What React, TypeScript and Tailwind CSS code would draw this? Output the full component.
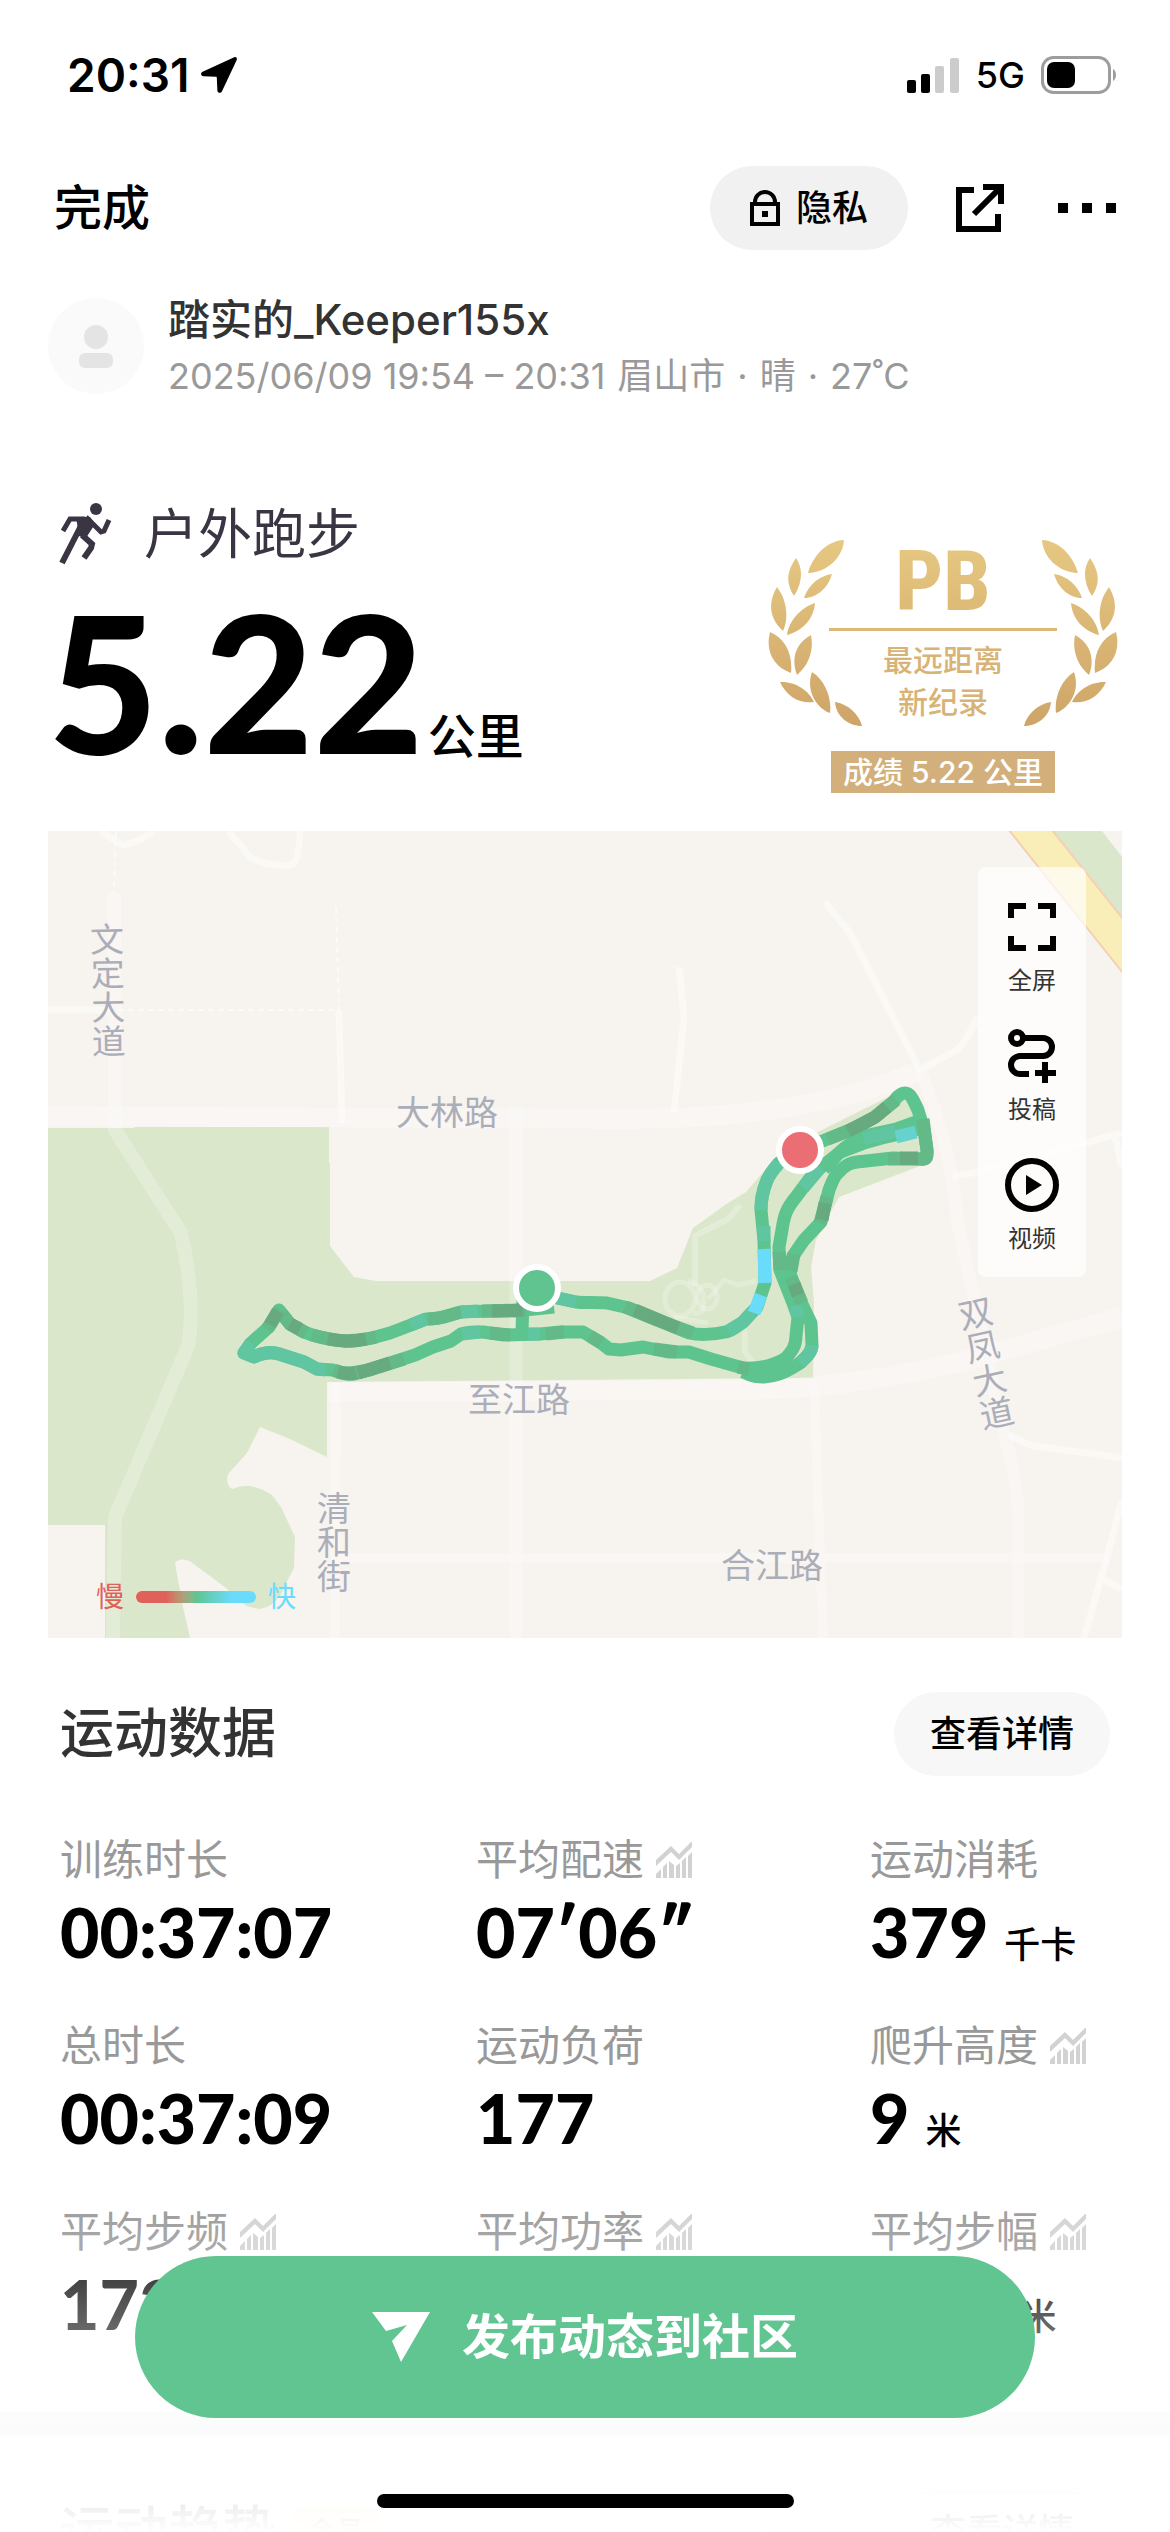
import type { ReactNode } from "react";

interface Stat {
  label: string;
  value?: string;
  unit?: string;
  chart?: boolean;
}

const stats: Stat[] = [
  { label: "训练时长", value: "00:37:07" },
  { label: "平均配速", value: "07′06″", chart: true },
  { label: "运动消耗", value: "379", unit: "千卡" },
  { label: "总时长", value: "00:37:09" },
  { label: "运动负荷", value: "177" },
  { label: "爬升高度", value: "9", unit: "米", chart: true },
  { label: "平均步频", value: "173", chart: true },
  { label: "平均功率", chart: true },
  { label: "平均步幅", value: "0.81", unit: "米", chart: true },
];

function StatusBar() {
  return (
    <div className="flex h-[150px] items-center justify-between pl-[67px] pr-[53px]">
      <div className="flex items-center gap-3">
        <span className="text-[46px] font-semibold leading-none">20:31</span>
        <svg className="size-9" viewBox="0 0 36 36">
          <path
            d="M33.2.3 1.6 14.8c-2.3 1.1-1.9 4.3.8 4.5l12.4.5c.7 0 1 .3 1 1l.6 12.6c.2 2.8 3.4 3.4 4.6.8L35.7 3C36.5 1.200 35-.5 33.200.3z"
            fill="#000"
          />
        </svg>
      </div>
      <div className="flex items-center gap-4">
        <svg className="h-[35px] w-[53px]" viewBox="0 0 53 35">
          <rect x="0" y="22" width="9" height="13" rx="2" fill="#000" />
          <rect x="14" y="16" width="9" height="19" rx="2" fill="#000" />
          <rect x="28" y="8" width="9" height="27" rx="2" fill="#ccc" />
          <rect x="43" y="0" width="9" height="35" rx="2" fill="#ccc" />
        </svg>
        <span className="text-[36px] font-medium leading-none">5G</span>
        <svg className="h-[38px] w-[76px]" viewBox="0 0 76 38">
          <rect x="1.500" y="1.500" width="67" height="35" rx="11" fill="none" stroke="#9d9d9d" strokeWidth="3" />
          <rect x="6" y="6" width="28" height="26" rx="7" fill="#000" />
          <path d="M72 13c4 2 4 10 0 12z" fill="#9d9d9d" />
        </svg>
      </div>
    </div>
  );
}

function LockIcon() {
  return (
    <svg className="h-9 w-[30px]" viewBox="0 0 30 36" fill="none" stroke="#000" strokeWidth="4">
      <path d="M2 14h26v20H2z" />
      <path d="M5 13v-1a10 10 0 0 1 20 0v1" />
      <path d="M12 21h6v6h-6z" fill="#000" stroke="none" />
    </svg>
  );
}

function ShareIcon() {
  return (
    <svg className="size-[50px]" viewBox="0 0 50 50" fill="none" stroke="#000" strokeWidth="6">
      <path d="M20 7H5v39h39V31" />
      <path d="M29 4h18v17M45 6 20 31" />
    </svg>
  );
}

function RunnerIcon() {
  return (
    <svg className="h-[62px] w-[54px]" viewBox="0 0 54 62">
      <circle cx="38" cy="6" r="6" fill="#3b3543" />
      <g fill="none" stroke="#3b3543">
        <path d="M5 28l7-12h15" strokeWidth="5" />
        <path d="M27 15 4 60" strokeWidth="6" />
        <path d="M28 14l15 15 3-1 5-11" strokeWidth="5" />
        <path d="M24 32l10 9-1 4-7 10" strokeWidth="6" />
      </g>
      <path d="M18 14h14l5 7-9 14-7-2z" fill="#3b3543" />
    </svg>
  );
}

function ChartIcon() {
  return (
    <svg className="size-9" viewBox="0 0 36 36" fill="#d2d2d2">
      <path d="M0 18 15 4l8 8L36-1v6L23 18l-8-8L0 24z" />
      <path d="M0 32l5-5v9H0zM7 25l4-4v15H7zM13 19l5 4v13h-5zM20 24l4-3v15h-4zM26 19l4-4v21h-4zM32 14l4-4v26h-4z" />
    </svg>
  );
}

const leaves =
  "M143 0C142 16 128 32 107 33C111 18 124 1 143 0ZM95 18C102 28 102 42 93 56C86 45 84 34 95 18ZM131 34C127 48 116 58 103 58C107 46 117 36 131 34ZM76 47C86 60 88 78 82 91C69 79 66 64 76 47ZM114 63C113 78 102 91 86 95C88 81 99 68 114 63ZM69 92C84 98 92 114 90 133C73 127 64 112 69 92ZM110 95C113 110 108 125 96 135C90 119 94 104 110 95ZM111 132C124 140 131 158 129 173C117 169 104 152 111 132ZM79 142C93 141 108 150 113 162C99 164 86 157 79 142ZM134 162C147 164 158 174 161 186C147 186 135 176 134 162Z";

function RecordBadge() {
  return (
    <div className="flex flex-col items-center gap-7">
      <div className="relative flex w-[350px] flex-col items-center">
        <svg className="absolute left-0 top-0 h-[188px] w-full" viewBox="0 0 350 188">
          <defs>
            <linearGradient id="gold" x1="0" y1="0" x2="0" y2="188" gradientUnits="userSpaceOnUse">
              <stop offset="0" stopColor="#e6c882" />
              <stop offset="1" stopColor="#cea468" />
            </linearGradient>
          </defs>
          <g fill="url(#gold)">
            <path d={leaves} transform="translate(-67 0)" />
            <path d={leaves} transform="matrix(-1 0 0 1 417 0)" />
          </g>
        </svg>
        <span className="bg-linear-to-b from-[#e6c882] to-[#dbb875] bg-clip-text font-['Roboto_Condensed',Roboto,sans-serif] text-[84px] font-extrabold leading-[84px] text-transparent">
          PB
        </span>
        <div className="mt-1 h-[3px] w-[228px] bg-[#dcb978]" />
        <p className="mt-2 text-center text-[30px] font-medium leading-[42px] text-[#d8b376]">
          最远距离
          <br />
          新纪录
        </p>
      </div>
      <span className="bg-[#d2af7b] px-3 text-[30px] font-medium leading-[42px] text-white">
        成绩 5.22 公里
      </span>
    </div>
  );
}

const upperRoute =
  "M506 476L467 480C440 480 425 480 413 481C400 484 395 488 378 488L363 494L342 502L324 507C310 510 300 511 296 510C285 509 270 507 256 501L242 493L231 479L221 496L203 512L196 522L206 526C214 522 222 520 231 523L256 531L269 538L285 539C292 542 300 544 306 543L321 539L367 524L385 516L403 510L413 503C420 500 428 501 435 501L456 504L492 503L513 501L535 501L552 511L561 518L573 519L595 516L620 521L641 521L663 528L695 537C712 538 725 535 738 527C744 520 748 515 748 505L750 486L745 472L732 439L731 416L734 399C736 385 738 378 748 366L766 342L791 322C800 317 810 315 816 312L834 307L856 302L877 296";

const lowerRoute =
  "M695 541C705 546 710 546 716 546C728 545 735 543 752 532C760 525 764 520 764 514L763 492L752 469L743 446C741 436 743 430 745 425L756 409L773 391L781 359C785 348 788 343 791 341C798 333 803 332 809 331L845 327L873 328C880 329 879 324 879 319L876 299L870 279C865 268 862 262 857 262C851 262 848 268 845 271L827 286C815 293 810 296 802 299L752 319L731 332C724 340 720 345 718 352C714 362 713 370 713 379L716 409L717 452L709 476L695 491C685 499 680 501 677 501C665 504 650 504 641 502L609 489L581 477L559 472C550 471 535 472 528 471L509 467L489 457M776 338C790 325 790 318 816 305L848 298L873 289M475 466L474 501";

function RouteMap() {
  return (
    <svg className="block w-full bg-[#f7f4ef]" viewBox="0 0 1074 807" role="img" aria-label="跑步轨迹">
      <path
        d="M0 297L86 297L86 296H281V332H282V415L306 446L328 450H602L629 437L645 397L677 374L698 361L730 324L770 301L848 262L873 270L885 330L791 366L780 386L768 409L763 436L766 472L765 547L634 548L279 551V626L242 608L212 596L199 622L181 642C177 648 180 658 185 658C195 653 210 654 224 664L233 676L247 706L246 737L238 752C232 770 222 776 212 778C204 777 199 775 197 774L178 757L147 734C140 727 130 727 127 732L135 776L142 807H57V694H0Z"
        fill="#dae7cb"
      />
      <path d="M1004 0H1054L1074 26V87Z" fill="#dae7cb" />
      <path d="M961 -1H1004L1075 88V142Z" fill="#faeeb8" stroke="#f5cfb4" strokeWidth="2" />

      {/* Roads */}
      <g fill="none" stroke="#fff" strokeLinejoin="round">
        <g strokeOpacity=".42" strokeWidth="7">
          <path d="M53 0L74 14Q90 12 106 0M180 0L203 27Q220 36 244 34Q251 30 252 0M0 179H60M291 179L294 292" />
          <path d="M631 136L636 186L626 282M777 71L802 102L872 239L909 219Q922 205 929 186M904 346L929 341L1074 302M1066 302L1074 336" />
          <path d="M961 604L981 614L1074 627M1074 669L1059 726L1036 807M1054 747L1074 759" />
        </g>
        <g strokeOpacity=".5" strokeWidth="2" strokeDasharray="6 4">
          <path d="M68 0L66 62M60 179H290M288 76L291 179" />
        </g>
        <g strokeOpacity=".24">
          <path d="M66 62L67 299L133 402Q148 470 140 515L67 686L65 807" strokeWidth="14" />
          <path d="M0 285L552 288Q760 290 872 239" strokeWidth="20" />
          <path d="M468 276V807M872 239Q905 320 909 389L956 602Q970 650 970 686V807" strokeWidth="13" />
          <path d="M280 561L700 559Q800 557 909 532L1074 486" strokeWidth="20" />
          <path d="M766 549L775 807M288 552L287 807M288 727L1059 727" strokeWidth="10" />
          <path d="M647 455V405L680 388L692 374M697 500V520L708 537" strokeWidth="6" />
          <ellipse cx="632" cy="468" rx="15" ry="17" strokeWidth="5" />
          <ellipse cx="659" cy="466" rx="10" ry="12" strokeWidth="5" />
          <path d="M640 450Q656 455 656 470T645 482M660 468L676 449L690 454L708 450M625 486L660 492" strokeWidth="5" />
        </g>
      </g>

      {/* Road names */}
      <g
        className="font-['Noto_Sans_CJK_SC',sans-serif] text-[34px]"
        fill="#abaeb9"
        textAnchor="middle"
      >
        <text x="399" y="294">大林路</text>
        <text x="471" y="581">至江路</text>
        <text x="724" y="747">合江路</text>
        <text className="[writing-mode:vertical-rl]" x="60" y="159" transform="rotate(-1 60 159)">
          文定大道
        </text>
        <text className="[writing-mode:vertical-rl]" x="286" y="711">
          清和街
        </text>
        <text className="[writing-mode:vertical-rl]" x="938" y="532" transform="rotate(-12 938 532)">
          双凤大道
        </text>
      </g>

      {/* Track, coloured by pace */}
      <g fill="none" strokeWidth="13" strokeLinejoin="round">
        <path d={upperRoute} stroke="#5ec48f" />
        <path d={lowerRoute} stroke="#5ec48f" />
        <g stroke="#63b988">
          <path d="M328 506C310 510 300 511 296 510C285 509 276 507 264 504M258 502L242 493L234 483M413 481C400 484 395 488 380 488M298 543L321 539L356 528M442 502L462 504M577 476L609 489L645 502M743 446L754 472M743 440L746 423M732 439L731 421" />
          <path d="M840 328L873 328C880 329 879 324 879 319L875 288M848 269L827 286C815 293 810 296 780 308M498 503L516 501M606 518L629 521M286 539Q298 544 314 541M232 478L219 498M434 480L478 479M772 392L779 366M542 505L553 512M690 536L701 538" />
        </g>
        <g stroke="#67aa7f">
          <path d="M318 508C300 511 290 510 280 508M252 498L242 493M310 542L342 532M587 479L630 497M746 453L750 464M852 327H870M839 276L827 286L800 300M290 541Q300 544 308 542M230 480L222 494M444 480L475 479M774 389L777 372" />
        </g>
        <g stroke="#5fc6a1">
          <path d="M203 512L196 522L206 526C214 522 222 520 231 523L256 531L269 538L278 539M363 494L378 488M413 481L430 480M414 503L432 501M480 503H492M510 467L528 471" />
          <path d="M731 332C724 340 720 345 718 352C714 362 713 370 713 379M716 395V410M748 475L750 486M752 532C760 525 764 520 764 514M755 357L772 337M680 500L695 491L704 481M816 308L848 300" />
        </g>
        <path d="M716 418L717 452M713 464L706 482" stroke="#6adcfb" />
        <path d="M848 306L868 301" stroke="#66d2cf" />
      </g>
      <circle cx="489" cy="457" r="21" fill="#60c490" stroke="#fff" strokeWidth="6" />
      <circle cx="752" cy="319" r="21" fill="#ea6e73" stroke="#fff" strokeWidth="6" />
    </svg>
  );
}

function MapAction({ label, children }: { label: string; children: ReactNode }) {
  return (
    <button type="button" className="flex w-full flex-col items-center gap-2">
      <svg className="size-14" viewBox="0 0 56 56" fill="none" stroke="#000" strokeWidth="6">
        {children}
      </svg>
      <span className="text-2xl leading-9 text-[#333]">{label}</span>
    </button>
  );
}

function StatCell({ label, value, unit, chart }: Stat) {
  return (
    <div>
      <dt className="flex items-center gap-3 text-[42px] leading-[60px] text-[#999]">
        {label}
        {chart && <ChartIcon />}
      </dt>
      <dd className="flex items-baseline gap-4 font-[Lato,'Noto_Sans_CJK_SC',sans-serif] text-[68px] font-black leading-[84px]">
        {value}
        {unit && <span className="text-[36px] font-medium leading-none">{unit}</span>}
      </dd>
    </div>
  );
}

export default function App() {
  return (
    <main className="relative h-screen overflow-hidden bg-white font-[Inter,'Noto_Sans_CJK_SC',sans-serif] text-black">
      <StatusBar />

      <header className="flex h-[116px] items-center justify-between px-[54px]">
        <button type="button" className="text-[48px] font-medium leading-none">
          完成
        </button>
        <div className="flex items-center">
          <button
            type="button"
            className="flex h-[84px] items-center gap-4 rounded-full bg-[#f1f1f1] px-10 text-[36px] font-medium"
          >
            <LockIcon />
            隐私
          </button>
          <button type="button" aria-label="分享" className="ml-[46px]">
            <ShareIcon />
          </button>
          <button type="button" aria-label="更多" className="ml-[54px] flex gap-[14px]">
            <span className="size-[10px] bg-black" />
            <span className="size-[10px] bg-black" />
            <span className="size-[10px] bg-black" />
          </button>
        </div>
      </header>

      <section className="mt-6 flex items-center gap-6 px-12">
        <div className="flex size-24 flex-col items-center justify-center gap-1 rounded-full bg-[#fafafa]">
          <span className="size-6 rounded-full bg-[#e4e4e4]" />
          <span className="h-[15px] w-[34px] rounded-md bg-[#e4e4e4]" />
        </div>
        <div>
          <p className="text-[42px] font-medium leading-[60px] text-[#333]">踏实的_Keeper155x</p>
          <p className="flex gap-3 text-[36px] leading-[52px] text-[#999]">
            <span>2025/06/09 19:54 – 20:31</span>
            <span>眉山市</span>
            <span>·</span>
            <span>晴</span>
            <span>·</span>
            <span>27˚C</span>
          </p>
        </div>
      </section>

      <section className="mt-[90px] flex items-start justify-between pl-12 pr-[52px]">
        <div>
          <h1 className="flex h-[84px] items-center gap-8 pl-[10px] text-[54px] text-[#3b3543]">
            <RunnerIcon />
            户外跑步
          </h1>
          <p className="mt-1 flex items-baseline gap-1">
            <span className="font-[Lato,sans-serif] text-[190px] font-black leading-[200px]">5.22</span>
            <span className="text-[48px] font-medium">公里</span>
          </p>
        </div>
        <div className="pt-12">
          <RecordBadge />
        </div>
      </section>

      <section className="relative mx-12 mt-[38px]">
        <RouteMap />
        <div className="absolute right-9 top-9 flex w-[108px] flex-col gap-[29px] rounded-lg bg-white/70 pt-8 pb-5">
          <MapAction label="全屏">
            <path d="M7 19V7h15M34 7h15v12M49 37v12H34M22 49H7V37" />
          </MapAction>
          <MapAction label="投稿">
            <circle cx="13" cy="10" r="6" />
            <path d="M19 10h20a9 9 0 0 1 0 18H16a9 9 0 0 0 0 18h9M31 45h21M41 34v21" />
          </MapAction>
          <MapAction label="视频">
            <circle cx="28" cy="28" r="24" />
            <path d="M22 18v20l16-10z" fill="#000" stroke="none" />
          </MapAction>
        </div>
        <div className="absolute bottom-5 left-12 flex items-center gap-3 text-[28px] leading-[42px]">
          <span className="text-[#e0605a]">慢</span>
          <div className="h-3 w-[120px] rounded-full bg-linear-to-r from-[#e0605a] from-25% via-[#60c490] via-50% to-[#6adcfb] to-80%" />
          <span className="text-[#6adcfb]">快</span>
        </div>
      </section>

      <section className="px-[60px] pt-[54px]">
        <div className="flex items-center justify-between">
          <h2 className="text-[54px] font-medium leading-[84px] text-[#333]">运动数据</h2>
          <button type="button" className="h-[84px] rounded-full bg-[#f7f7f7] px-9 text-[36px] font-medium">
            查看详情
          </button>
        </div>
        <dl className="mt-[54px] grid grid-cols-[416fr_394fr_240fr] gap-y-[42px]">
          {stats.map((stat) => (
            <StatCell key={stat.label} {...stat} />
          ))}
        </dl>
      </section>

      <div className="mt-[66px] h-6 bg-[#f5f5f5]" />

      <section className="flex items-center justify-between px-[60px] pt-[54px]">
        <h2 className="flex items-center gap-4 text-[54px] font-medium leading-[84px] text-[#333]">
          运动趋势
          <span className="rounded-lg bg-[#f6dfb0] px-4 text-[28px] leading-[48px] text-[#6b4a1c]">会员</span>
        </h2>
        <button type="button" className="h-[84px] rounded-full bg-[#f7f7f7] px-9 text-[36px] font-medium">
          查看详情
        </button>
      </section>

      {/* Publish bar */}
      <div className="fixed inset-x-0 bottom-0 flex flex-col items-center bg-linear-to-b from-white/0 to-white pt-[66px] pb-6">
        <button
          type="button"
          className="mb-[76px] flex h-[162px] w-10/13 items-center justify-center gap-8 rounded-full bg-[#60c590] text-[48px] font-bold text-white"
        >
          <svg className="h-[50px] w-[58px]" viewBox="0 0 58 50" fill="#fff">
            <path d="M0 0h58L29 50 20 29l15-16-21 6z" />
          </svg>
          发布动态到社区
        </button>
        <div className="h-[14px] w-[417px] rounded-full bg-black" />
      </div>
    </main>
  );
}
